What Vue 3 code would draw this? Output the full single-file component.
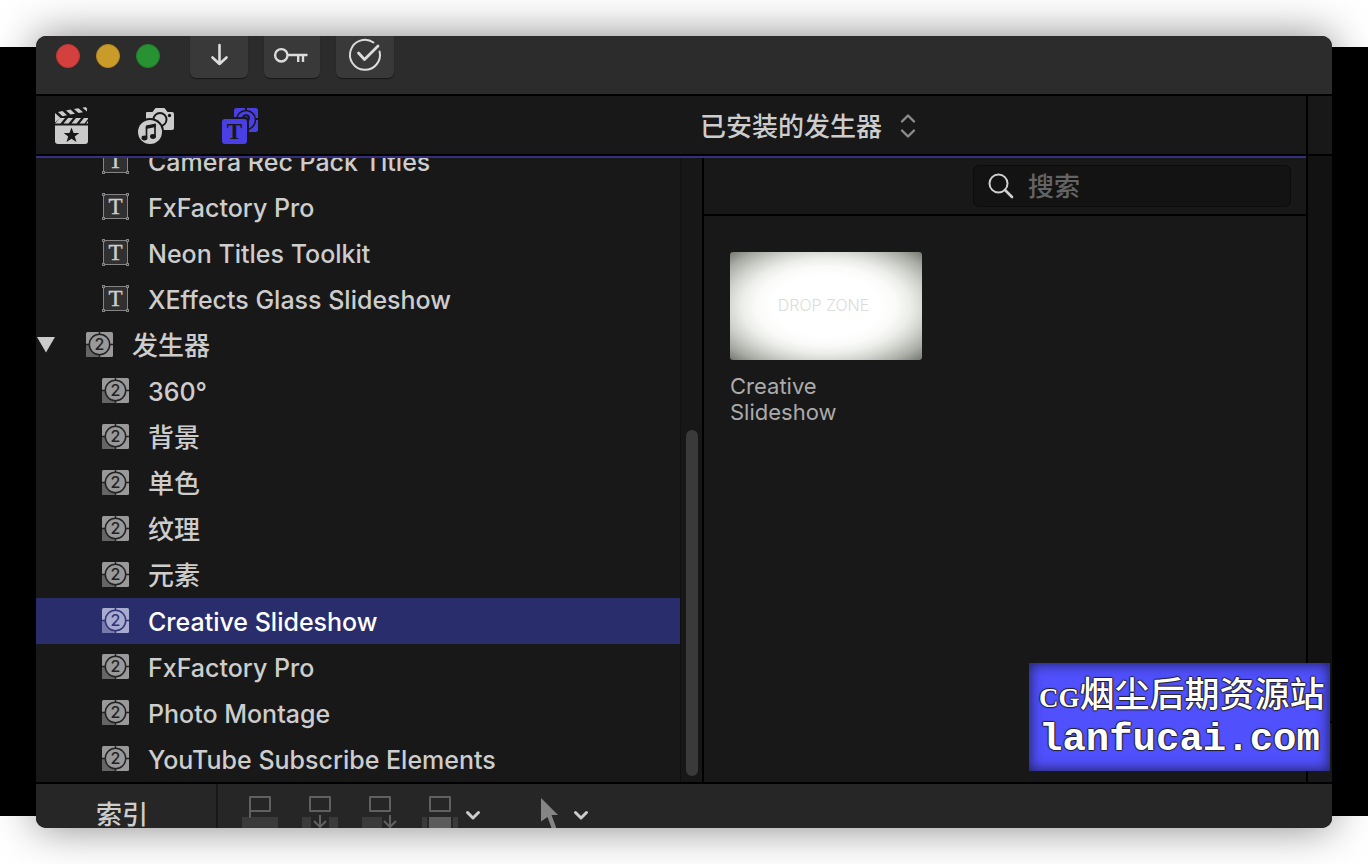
<script setup>
import { ref } from 'vue'

const rows = [
  { name: 'Camera Rec Pack Titles', kind: 'title' },
  { name: 'FxFactory Pro', kind: 'title' },
  { name: 'Neon Titles Toolkit', kind: 'title' },
  { name: 'XEffects Glass Slideshow', kind: 'title' },
  { name: '发生器', kind: 'generator', group: true, cjk: true },
  { name: '360°', kind: 'generator' },
  { name: '背景', kind: 'generator', cjk: true },
  { name: '单色', kind: 'generator', cjk: true },
  { name: '纹理', kind: 'generator', cjk: true },
  { name: '元素', kind: 'generator', cjk: true },
  { name: 'Creative Slideshow', kind: 'generator' },
  { name: 'FxFactory Pro', kind: 'generator' },
  { name: 'Photo Montage', kind: 'generator' },
  { name: 'YouTube Subscribe Elements', kind: 'generator' }
]
const selected = ref(10)
const query = ref('')
</script>

<template>
  <div class="desktop">
    <main class="window">
      <header class="titlebar">
        <div class="lights">
          <button class="light red" aria-label="关闭"></button>
          <button class="light yellow" aria-label="最小化"></button>
          <button class="light green" aria-label="缩放"></button>
        </div>
        <div class="tools">
          <button class="tool" aria-label="导入">
            <svg width="58" height="42" viewBox="0 0 58 42" fill="none" stroke="#dcdcdc" stroke-width="2.6" stroke-linecap="round" stroke-linejoin="round">
              <path d="M29.500 9V28M22.500 21.500L29.500 28L36.500 21.500" />
            </svg>
          </button>
          <button class="tool narrow" aria-label="关键词">
            <svg width="56" height="42" viewBox="0 0 56 42" fill="none" stroke="#dcdcdc" stroke-width="2.400">
              <circle cx="17.300" cy="19.300" r="6.200" />
              <path d="M23.500 19H43.500M34.200 19V26M39 19V26" />
            </svg>
          </button>
          <button class="tool" aria-label="后台任务">
            <svg width="58" height="42" viewBox="0 0 58 42" fill="none" stroke="#dcdcdc" stroke-linecap="round" stroke-linejoin="round">
              <path d="M37.500 6.500A15 15 0 1 0 43.600 15.500" stroke-width="2" />
              <path d="M22.500 17L28.500 23.500L42 10" stroke-width="2.800" />
            </svg>
          </button>
        </div>
      </header>

      <div class="workspace">
        <section class="browser">
          <nav class="tabs">
            <div class="tab-icons">
              <button class="tab" aria-label="资源库">
                <svg width="37" height="38" viewBox="0 0 37 38">
                  <path d="M1 18.500H34V34Q34 37 31 37H4Q1 37 1 34Z" fill="#cbcbcb" />
                  <path d="M17.500 20.500L19.600 26H25.300L20.800 29.500L22.500 35L17.500 31.700L12.500 35L14.200 29.500L9.700 26H15.400Z" fill="#181818" />
                  <g fill="#cbcbcb">
                    <path d="M1 6L6.500 11L1 15.500Z" />
                    <path d="M4 5L8.500 4L13 8.200L8.500 9.200Z" />
                    <path d="M12 3.400L16.500 2.500L21 6.700L16.500 7.600Z" />
                    <path d="M20 2L24.500 1.200L29 5.200L24.500 6.100Z" />
                    <path d="M28.500.800L31.500 0L33 1.500V4.500Z" />
                    <path d="M6 11H11L6.500 16.500H1Z" />
                    <path d="M14 11H19L14.500 16.500H9.500Z" />
                    <path d="M22 11H27L22.500 16.500H17.500Z" />
                    <path d="M30 11H34V12L30.500 16.500H25.500Z" />
                    <path d="M34 14V16.500H32.200Z" />
                  </g>
                </svg>
              </button>
              <button class="tab" aria-label="照片和音频">
                <svg width="38" height="38" viewBox="0 0 38 38">
                  <path d="M9 6Q9 5 10 5H15.500L18.500 1H27.500L30.500 5H35Q37 5 37 7V21Q37 23 35 23H9Z" fill="#cbcbcb" />
                  <circle cx="32.500" cy="8.500" r="1.700" fill="#181818" />
                  <circle cx="23" cy="12.500" r="6.500" fill="none" stroke="#181818" stroke-width="2" />
                  <circle cx="13" cy="25" r="14" fill="#181818" />
                  <circle cx="13" cy="25" r="12" fill="#cbcbcb" />
                  <path d="M9.500 30V20L18 18V28.500" fill="none" stroke="#181818" stroke-width="1.700" />
                  <path d="M9 18.500L18.800 16.500V20L9 22Z" fill="#181818" />
                  <ellipse cx="7.500" cy="31" rx="3" ry="2.400" fill="#181818" />
                  <ellipse cx="16" cy="29.500" rx="3" ry="2.400" fill="#181818" />
                </svg>
              </button>
              <button class="tab" aria-label="字幕和发生器">
                <svg width="38" height="38" viewBox="0 0 38 38">
                  <rect x="13" y="1" width="24" height="24" rx="2.500" fill="#4a3fe4" />
                  <circle cx="25" cy="13" r="9.500" fill="none" stroke="#181818" stroke-width="1.500" />
                  <path d="M25 0V3.500M34.500 12H38" stroke="#181818" stroke-width="2" />
                  <path d="M22 11.500Q22 8.300 25 8.300T28 11.500Q28 13 25.500 15" fill="none" stroke="#181818" stroke-width="2" />
                  <rect x="-1" y="10" width="29" height="29" rx="4" fill="#181818" />
                  <rect x="1" y="12" width="25" height="25" rx="3" fill="#4a3fe4" />
                  <text x="13.500" y="32" text-anchor="middle" class="serif" font-size="23" font-weight="bold" fill="#181818">T</text>
                </svg>
              </button>
            </div>
            <button class="source">
              <span>已安装的发生器</span>
              <svg width="16" height="26" viewBox="0 0 16 26" fill="none" stroke="#8c8c8c" stroke-width="2.400" stroke-linecap="round" stroke-linejoin="round">
                <path d="M2 8.500L8 2.500L14 8.500M2 17.500L8 23.500L14 17.500" />
              </svg>
            </button>
          </nav>

          <div class="panes">
            <aside class="sidebar">
              <ul class="list">
                <li v-for="(row, i) in rows" :key="i">
                  <button class="row" :class="{ group: row.group, cjk: row.cjk, selected: selected === i }" @click="selected = i">
                    <svg v-if="row.group" class="arrow" width="18" height="16" viewBox="0 0 18 16">
                      <path d="M0 0H18L9 15.500Z" fill="#cbcbcb" />
                    </svg>
                    <svg v-if="row.kind === 'title'" class="icon" width="27" height="28" viewBox="0 0 27 28">
                      <g fill="#303030" stroke="#858585">
                        <rect x="1.500" y="2.500" width="24" height="24" />
                        <rect x=".500" y="1.500" width="2" height="2" />
                        <rect x="24.500" y="1.500" width="2" height="2" />
                        <rect x=".500" y="25.500" width="2" height="2" />
                        <rect x="24.500" y="25.500" width="2" height="2" />
                      </g>
                      <text x="13.500" y="22" text-anchor="middle" class="serif" font-size="23" fill="#cdcdcd" stroke="#cdcdcd" stroke-width=".400">T</text>
                    </svg>
                    <svg v-else class="icon generator" width="27" height="28" viewBox="0 0 27 28">
                      <rect class="face" x="0" y="2" width="27" height="25" rx="1.500" />
                      <path class="shade" d="M0 14.500H13.500V27H1.500Q0 27 0 25.500Z" />
                      <circle class="face" cx="13.500" cy="14.500" r="10.500" />
                      <path class="line" d="M13.500 1V4M13.500 25V28M0 14.500H3M24 14.500H27" />
                      <circle class="line" cx="13.500" cy="14.500" r="10.200" />
                      <text x="13.500" y="20" text-anchor="middle" font-size="16">2</text>
                    </svg>
                    <span>{{ row.name }}</span>
                  </button>
                </li>
              </ul>
              <div class="scroll"><div class="thumb"></div></div>
            </aside>

            <section class="content">
              <div class="searchbar">
                <label class="search">
                  <svg width="26" height="26" viewBox="0 0 26 26" fill="none" stroke="#cfcfcf" stroke-linecap="round">
                    <circle cx="10.500" cy="10.500" r="9" stroke-width="2" />
                    <path d="M17 17L24 24" stroke-width="2.600" />
                  </svg>
                  <input v-model="query" type="search" placeholder="搜索" aria-label="搜索" />
                </label>
              </div>
              <div class="gallery">
                <figure class="item">
                  <div class="thumbnail">DROP ZONE</div>
                  <figcaption>Creative Slideshow</figcaption>
                </figure>
              </div>
            </section>
          </div>
        </section>

        <div class="viewer">
          <div class="viewer-head"></div>
          <div class="viewer-body"></div>
          <div class="viewer-foot"></div>
        </div>
      </div>

      <footer class="footer">
        <button class="index">索引</button>
        <div class="edits">
          <button aria-label="连接片段">
            <svg width="36" height="44" viewBox="0 0 36 44">
              <path d="M0 34Q0 33 1 33H6Q8 36 10 33H35Q36 33 36 34V44H0Z" fill="#3a3a3a" />
              <path d="M8 34V13H28V27H8" fill="none" stroke="#606060" stroke-width="2" stroke-linejoin="round" />
            </svg>
          </button>
          <button aria-label="插入片段">
            <svg width="36" height="44" viewBox="0 0 36 44">
              <path d="M0 33H9V44H0ZM27 33H36V44H27Z" fill="#3a3a3a" />
              <path d="M8 13H28V27H8ZM18 31V43M12 37L18 43L24 37" fill="none" stroke="#606060" stroke-width="2" stroke-linejoin="round" />
            </svg>
          </button>
          <button aria-label="追加片段">
            <svg width="36" height="44" viewBox="0 0 36 44">
              <path d="M0 33H20V44H0Z" fill="#3a3a3a" />
              <path d="M8 13H28V27H8ZM28 31V43M22 37L28 43L34 37" fill="none" stroke="#606060" stroke-width="2" stroke-linejoin="round" />
            </svg>
          </button>
          <button aria-label="覆盖片段">
            <svg width="36" height="44" viewBox="0 0 36 44">
              <path d="M0 33H5V44H0ZM31 33H36V44H31Z" fill="#3a3a3a" />
              <path d="M7 33H29V44H7Z" fill="#5c5c5c" />
              <path d="M8 13H28V27H8Z" fill="none" stroke="#606060" stroke-width="2" stroke-linejoin="round" />
            </svg>
          </button>
        </div>
        <button class="chevron" aria-label="编辑选项">
          <svg width="16" height="44" viewBox="0 0 16 44"><path d="M2.500 28.500L8 34L13.500 28.500" /></svg>
        </button>
        <button class="pointer" aria-label="选择工具">
          <svg width="18" height="44" viewBox="0 0 18 44" fill="#858585">
            <path d="M0 14L17 31H10.500L15 43V44H10.500L6.500 33L0 37.500Z" />
          </svg>
        </button>
        <button class="chevron" aria-label="工具选项">
          <svg width="16" height="44" viewBox="0 0 16 44"><path d="M2.500 28.500L8 34L13.500 28.500" /></svg>
        </button>
      </footer>

      <div class="watermark">
        <div class="site"><span class="latin">CG</span>烟尘后期资源站</div>
        <div class="domain">lanfucai.com</div>
      </div>
    </main>
  </div>
</template>

<style>
body {
  margin: 0;
  background: #fff;
}
</style>

<style scoped>
* {
  box-sizing: border-box;
}
.desktop {
  min-height: 100vh;
  padding: 36px;
  display: flex;
  background: linear-gradient(#fff 47px, #000 47px, #000 calc(100% - 48px), #fff calc(100% - 48px));
  font-family: Inter, "Noto Sans CJK SC", sans-serif;
  color: #cdcdcd;
}
button {
  padding: 0;
  border: 0;
  background: none;
  color: inherit;
  font: inherit;
}
svg {
  display: block;
  flex: none;
}
.serif {
  font-family: "Liberation Serif", serif;
}
.window {
  position: relative;
  flex: 1;
  min-width: 0;
  display: flex;
  flex-direction: column;
  overflow: hidden;
  border-radius: 10px;
  background: #181818;
  box-shadow: 0 0 44px rgba(0, 0, 0, 0.48);
}
.titlebar {
  display: flex;
  height: 60px;
  background: #2c2c2c;
  border-bottom: 2px solid #000;
}
.lights {
  display: flex;
  gap: 16px;
  padding: 8px 30px 0 20px;
}
.light {
  width: 24px;
  height: 24px;
  border-radius: 50%;
}
.red { background: #d4403d; border: 1px solid #c23936; }
.yellow { background: #c99b28; border: 1px solid #b98922; }
.green { background: #289232; border: 1px solid #20822a; }
.tools {
  display: flex;
  gap: 16px;
}
.tool {
  height: 42px;
  border-radius: 0 0 6px 6px;
  background: #393939;
  box-shadow: 0 1px 1px rgba(0, 0, 0, 0.5);
}
.workspace {
  flex: 1;
  display: flex;
}
.browser {
  flex: 1;
  min-width: 0;
  display: flex;
  flex-direction: column;
}
.tabs {
  display: grid;
  grid-template-columns: 664px 1fr;
  align-items: center;
  height: 60px;
  border-bottom: 2px solid #000;
}
.tab-icons {
  display: flex;
  gap: 46px;
  padding: 2px 0 0 18px;
}
.source {
  display: flex;
  align-items: center;
  gap: 18px;
  justify-self: start;
  padding-top: 4px;
  font-size: 26px;
  font-weight: 500;
  line-height: 40px;
}
.source svg {
  margin-bottom: 2px;
}
.panes {
  flex: 1;
  display: flex;
  border-top: 2px solid #352f80;
}
.sidebar {
  width: 668px;
  flex: none;
  display: flex;
  overflow: hidden;
  border-right: 2px solid #000;
}
.list {
  flex: 1;
  margin: -20px 0 0;
  padding: 0;
  list-style: none;
}
.row {
  display: flex;
  align-items: center;
  gap: 19px;
  width: 100%;
  height: 46px;
  padding-left: 66px;
  font-size: 25px;
  font-weight: 500;
  line-height: 44px;
  white-space: nowrap;
}
.row span {
  margin-top: 2px;
}
.row.cjk {
  font-size: 26px;
}
.icon {
  margin-bottom: 2px;
}
.row.group {
  padding-left: 1px;
}
.arrow {
  margin-right: 12px;
}
.row.selected {
  background: #292d6c;
  color: #fff;
}
.generator {
  --face: #999;
  --shade: #656565;
  --ink: #222;
}
.selected .generator {
  --face: #a9abcf;
  --shade: #777aad;
  --ink: #30357a;
}
.face { fill: var(--face); }
.shade { fill: var(--shade); }
.line { fill: none; stroke: var(--ink); stroke-width: 1.5; }
.generator text { fill: var(--ink); }
.scroll {
  display: flex;
  align-items: flex-end;
  width: 22px;
  padding: 0 0 6px 5px;
  border-left: 1px solid #101010;
  background: #171717;
}
.thumb {
  width: 12px;
  height: 346px;
  border-radius: 6px;
  background: #3a3a3a;
}
.content {
  flex: 1;
  min-width: 0;
}
.searchbar {
  display: flex;
  justify-content: flex-end;
  height: 58px;
  padding: 7px 15px;
  border-bottom: 2px solid #000;
}
.search {
  display: flex;
  align-items: center;
  gap: 14px;
  width: 318px;
  height: 42px;
  padding: 0 14px;
  border: 1px solid #0c0c0c;
  border-radius: 6px;
  background: #131313;
}
.search input {
  flex: 1;
  min-width: 0;
  padding: 2px 0 0;
  border: 0;
  outline: 0;
  background: none;
  color: #cdcdcd;
  font: 500 26px/38px Inter, "Noto Sans CJK SC", sans-serif;
}
.search input::placeholder {
  color: #646464;
}
.gallery {
  padding: 36px 26px;
}
.item {
  width: 192px;
  margin: 0;
}
.thumbnail {
  display: flex;
  align-items: center;
  justify-content: center;
  height: 108px;
  padding: 0 5px 2px 0;
  border-radius: 3px;
  background: radial-gradient(ellipse at center, #fff 40%, #fafaf9 52%, #eceeea 62%, #d2d4cf 73%, #a9aca5 87%, #74776f 100%);
  color: #dcdcd9;
  font-size: 16px;
  font-weight: 300;
}
.item figcaption {
  width: 130px;
  padding-top: 13px;
  color: #ababab;
  font-size: 22px;
  line-height: 26px;
}
.viewer {
  display: flex;
  flex-direction: column;
  width: 26px;
  border-left: 2px solid #000;
}
.viewer-head {
  height: 60px;
  border-bottom: 2px solid #000;
}
.viewer-body {
  flex: 1;
  background: #121212;
}
.viewer-foot {
  height: 61px;
  border-top: 2px solid #000;
}
.footer {
  display: flex;
  height: 46px;
  border-top: 2px solid #000;
  background: #262626;
  overflow: hidden;
}
.index {
  width: 182px;
  padding: 12px 0 0 60px;
  border-right: 2px solid #181818;
  font-size: 26px;
  font-weight: 500;
  line-height: 38px;
  text-align: left;
}
.edits {
  display: flex;
  gap: 24px;
  padding: 0 7px 0 24px;
}
.chevron path {
  fill: none;
  stroke: #cdcdcd;
  stroke-width: 3;
  stroke-linecap: round;
  stroke-linejoin: round;
}
.pointer {
  padding: 0 14px 0 60px;
}
.watermark {
  position: absolute;
  right: 2px;
  bottom: 57px;
  width: 301px;
  height: 108px;
  padding: 7px 0 0 10px;
  background: #5050fc;
  box-shadow: inset 0 0 12px 2px #25256c;
  color: #fff;
  text-shadow: 1px 0 1px #222, -1px 0 1px #222, 0 1px 1px #222, 0 -1px 1px #222;
  white-space: nowrap;
}
.site {
  font-family: "Noto Sans CJK SC", sans-serif;
  font-size: 35px;
  font-weight: 500;
  line-height: 44px;
}
.latin {
  font-family: "Liberation Serif", serif;
  font-size: 27px;
  font-weight: bold;
}
.domain {
  font-family: "Liberation Mono", monospace;
  font-size: 39px;
  font-weight: bold;
  line-height: 40px;
}
</style>
